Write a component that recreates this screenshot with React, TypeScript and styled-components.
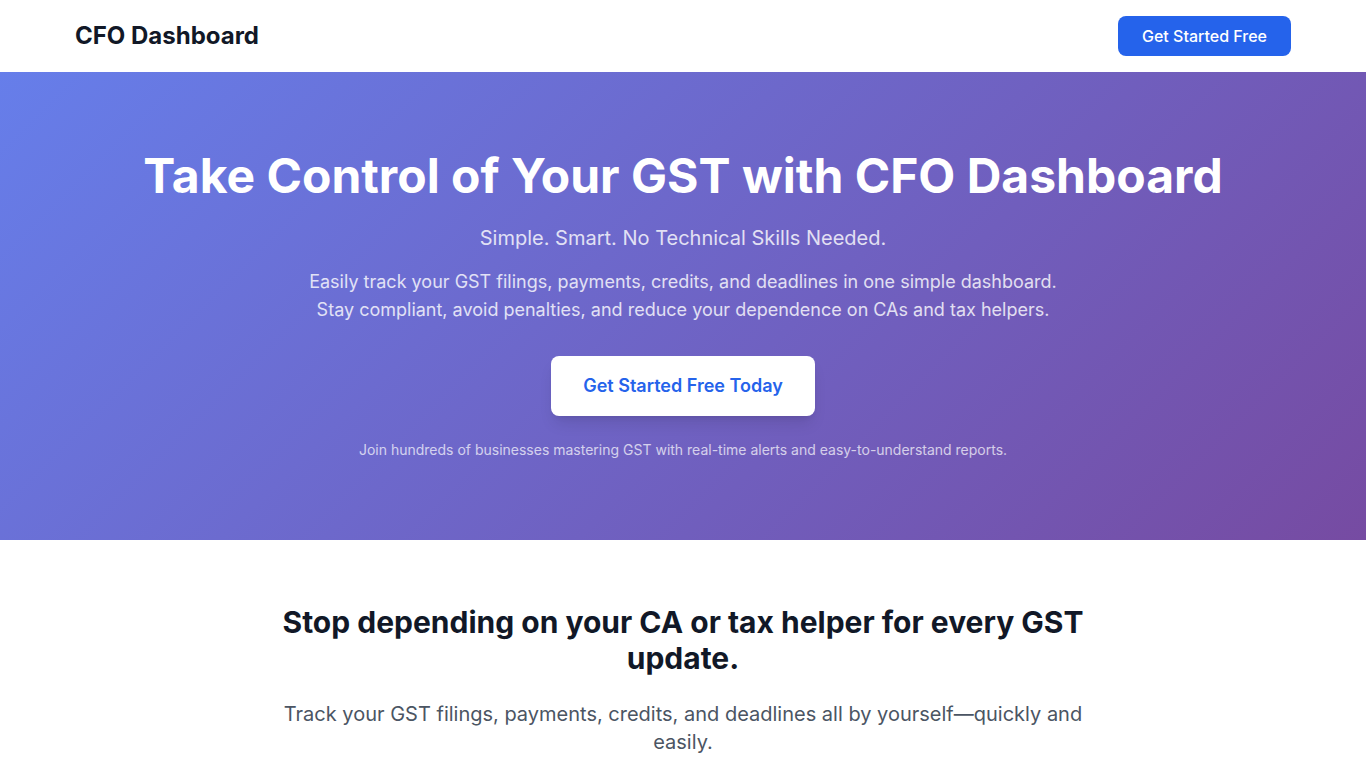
import React from 'react';
import styled, { createGlobalStyle } from 'styled-components';

const GlobalStyle = createGlobalStyle`
  *, *::before, *::after { box-sizing: border-box; }
  body {
    margin: 0;
    background: #ffffff;
    color: #111827;
    font-family: Inter, 'Liberation Sans', sans-serif;
    font-size: 16px;
    line-height: 24px;
    overflow-x: hidden;
  }
  h1, h2, p { margin: 0; }
  html { scrollbar-width: none; }
`;

const Header = styled.header`
  background: #ffffff;
`;

const HeaderInner = styled.div`
  display: flex;
  align-items: center;
  justify-content: space-between;
  max-width: 1280px;
  margin: 0 auto;
  padding: 16px 32px;
`;

const Brand = styled.div`
  font-size: 24px;
  line-height: 32px;
  font-weight: 700;
`;

const Button = styled.button<{ $large?: boolean }>`
  border: 0;
  border-radius: 8px;
  cursor: pointer;
  font-family: inherit;
  font-size: ${({ $large }) => ($large ? 18 : 16)}px;
  line-height: ${({ $large }) => ($large ? 28 : 24)}px;
  font-weight: ${({ $large }) => ($large ? 600 : 500)};
  padding: ${({ $large }) => ($large ? '16px 32px' : '8px 24px')};
  color: ${({ $large }) => ($large ? '#2563eb' : '#ffffff')};
  background: ${({ $large }) => ($large ? '#ffffff' : '#2563eb')};
  box-shadow: ${({ $large }) =>
    $large ? '0 10px 15px -3px rgba(0, 0, 0, 0.1), 0 4px 6px -4px rgba(0, 0, 0, 0.1)' : 'none'};
`;

const Hero = styled.section`
  padding: 80px 32px;
  text-align: center;
  color: #ffffff;
  background: linear-gradient(135deg, #667eea 0%, #764ba2 100%);
`;

const HeroTitle = styled.h1`
  margin-bottom: 24px;
  font-size: 48px;
  line-height: 48px;
  font-weight: 700;
`;

const HeroTagline = styled.p`
  margin-bottom: 16px;
  font-size: 20px;
  line-height: 28px;
  opacity: 0.8;
`;

const HeroText = styled.p`
  max-width: 768px;
  margin: 0 auto 32px;
  font-size: 18px;
  line-height: 28px;
  opacity: 0.8;
`;

const HeroNote = styled.p`
  margin-top: 24px;
  font-size: 14px;
  line-height: 20px;
  opacity: 0.7;
`;

const Intro = styled.section`
  max-width: 896px;
  margin: 0 auto;
  padding: 64px 32px;
  text-align: center;
`;

const IntroTitle = styled.h2`
  margin-bottom: 24px;
  font-size: 30px;
  line-height: 36px;
  font-weight: 700;
`;

const IntroText = styled.p`
  font-size: 20px;
  line-height: 28px;
  color: #4b5563;
`;

export default function App() {
  return (
    <>
      <GlobalStyle />
      <Header>
        <HeaderInner>
          <Brand>CFO Dashboard</Brand>
          <Button type="button">Get Started Free</Button>
        </HeaderInner>
      </Header>
      <main>
        <Hero>
          <HeroTitle>Take Control of Your GST with CFO Dashboard</HeroTitle>
          <HeroTagline>Simple. Smart. No Technical Skills Needed.</HeroTagline>
          <HeroText>
            Easily track your GST filings, payments, credits, and deadlines in one simple dashboard.
            Stay compliant, avoid penalties, and reduce your dependence on CAs and tax helpers.
          </HeroText>
          <Button type="button" $large>Get Started Free Today</Button>
          <HeroNote>
            Join hundreds of businesses mastering GST with real-time alerts and easy-to-understand reports.
          </HeroNote>
        </Hero>
        <Intro>
          <IntroTitle>Stop depending on your CA or tax helper for every GST update.</IntroTitle>
          <IntroText>
            Track your GST filings, payments, credits, and deadlines all by yourself—quickly and easily.
          </IntroText>
        </Intro>
      </main>
    </>
  );
}
